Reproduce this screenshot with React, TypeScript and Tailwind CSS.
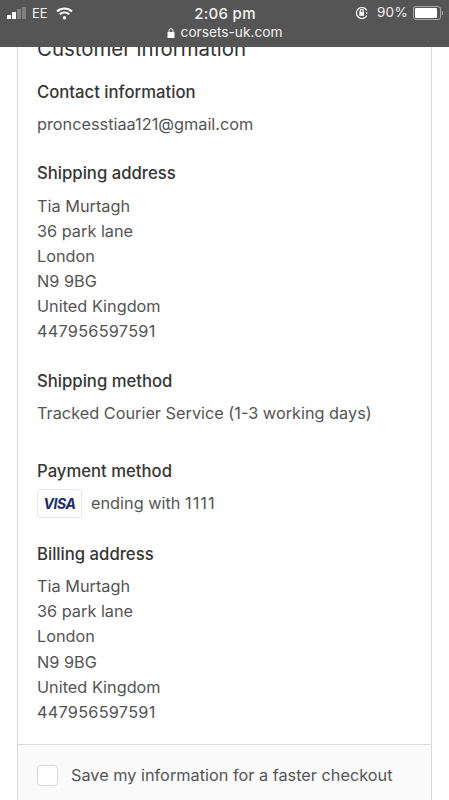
import React from "react";

const StatusBar: React.FC = () => (
    <div className="relative z-10 h-[47px] shrink-0 bg-[#555555] text-[#f2f2f2]">
        <div className="flex h-[25px] items-center justify-between pl-[7px] pr-[6px] pt-[1px]">
            <div className="flex w-[140px] items-center">
                <div className="flex items-end gap-[1px]">
                    <span className="h-[4px] w-[4px] bg-white" />
                    <span className="h-[7px] w-[4px] bg-white" />
                    <span className="h-[10px] w-[4px] bg-[#808080]" />
                    <span className="h-[12px] w-[4px] bg-[#808080]" />
                </div>
                <span className="ml-[6px] text-[13px] leading-none">EE</span>
                <svg className="ml-[8px]" width="17" height="13" viewBox="0 0 17 13" fill="none" stroke="white" strokeWidth="2">
                    <path d="M1 4.5c4.300-4 10.700-4 15 0" />
                    <path d="M3.700 7.300c2.800-2.500 6.800-2.500 9.600 0" />
                    <circle cx="8.500" cy="10.800" r="1.700" fill="white" stroke="none" />
                </svg>
            </div>
            <span className="text-[15px] font-medium leading-none tracking-[0.3px]">2:06 pm</span>
            <div className="flex w-[140px] items-center justify-end">
                <svg width="14" height="14" viewBox="0 0 14 14" fill="none" stroke="white" strokeWidth="1.200">
                    <path d="M11.800 9.500A5.500 5.500 0 1 1 11.800 4.500" />
                    <path d="M11 6l2 1-2 1z" fill="white" stroke="none" />
                    <rect x="4.300" y="6" width="4.800" height="3.800" fill="white" stroke="none" />
                    <path d="M5.200 6V4.800a1.500 1.500 0 0 1 3 0V6" />
                </svg>
                <span className="ml-[8px] text-[13.500px] leading-none tracking-[0.3px]">90%</span>
                <div className="ml-[5px] flex h-[14px] w-[28px] items-center rounded-[3px] border border-[#a8a8a8] p-[1px]">
                    <div className="h-full w-[90%] rounded-[1px] bg-white" />
                </div>
                <span className="ml-[1px] h-[4px] w-[1px] bg-[#a8a8a8]" />
            </div>
        </div>
        <div className="flex h-[15px] items-center justify-center text-[13.700px] leading-none">
            <svg className="mr-[6px]" width="8" height="10" viewBox="0 0 8 10" fill="white">
                <rect x="0.500" y="4" width="7" height="6" rx="0.500" />
                <path d="M2 4V2.700a2 2 0 0 1 4 0V4" fill="none" stroke="white" strokeWidth="1" />
            </svg>
            <span>corsets-uk.com</span>
        </div>
    </div>
);

const Title: React.FC<{ children: React.ReactNode; className?: string }> = ({ children, className }) => (
    <h3 className={`text-[16.700px] font-medium leading-[22px] text-[#363636] ${className ?? ""}`}>{children}</h3>
);

const Lines: React.FC<{ lines: string[]; className?: string }> = ({ lines, className }) => (
    <div className={`text-[16.300px] text-[#545454] ${className ?? ""}`}>
        {lines.map((line) => (
            <p key={line} className={/^\d+$/.test(line) ? "tracking-[0.25px]" : ""}>
                {line}
            </p>
        ))}
    </div>
);

const address = ["Tia Murtagh", "36 park lane", "London", "N9 9BG", "United Kingdom", "447956597591"];

const App: React.FC = () => {
    return (
        <div className="flex h-[800px] w-[449px] flex-col overflow-hidden bg-white font-['Inter','Liberation_Sans',sans-serif]">
            <StatusBar />
            <div className="mx-[17px] flex flex-1 flex-col border-x border-[#d9d9d9]">
                <div className="flex-1 px-[19px]">
                    <h2 className="-mt-[11px] text-[20.400px] leading-[26px] text-[#333333]">Customer information</h2>
                    <Title className="mt-[19px]">Contact information</Title>
                    <Lines lines={["proncesstiaa121@gmail.com"]} className="mt-[9px] leading-[25px]" />
                    <Title className="mt-[25px]">Shipping address</Title>
                    <Lines lines={address} className="mt-[10px] leading-[25px]" />
                    <Title className="mt-[26px]">Shipping method</Title>
                    <Lines lines={["Tracked Courier Service (1-3 working days)"]} className="mt-[9px] leading-[25px]" />
                    <Title className="mt-[34px]">Payment method</Title>
                    <div className="mt-[7px] flex items-center">
                        <div className="flex h-[29px] w-[45px] items-center justify-center rounded-[4px] border border-[#e6e6e6]">
                            <span className="text-[14px] font-bold italic leading-none tracking-[-0.5px] text-[#1a2a6c]">VISA</span>
                        </div>
                        <span className="ml-[9px] text-[16.300px] text-[#545454]">
                            ending with <span className="tracking-[1px]">1111</span>
                        </span>
                    </div>
                    <Title className="mt-[25px]">Billing address</Title>
                    <Lines lines={address} className="mt-[9px] leading-[25.200px]" />
                </div>
                <div className="flex h-[56px] shrink-0 items-start border-t border-[#d9d9d9] bg-[#fafafa] px-[19px] pt-[20px]">
                    <span className="h-[21px] w-[21px] rounded-[4px] border border-[#d9d9d9] bg-white" />
                    <span className="ml-[13px] text-[16.300px] leading-[21px] text-[#545454]">Save my information for a faster checkout</span>
                </div>
            </div>
        </div>
    );
};

export default App;
